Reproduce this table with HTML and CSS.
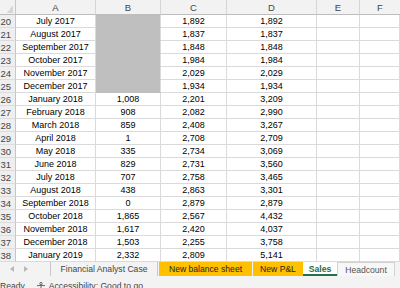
FILE: index.html
```html
<!DOCTYPE html>
<html>
<head>
<meta charset="utf-8">
<link rel="stylesheet" href="styles.css">
</head>
<body>
<div class="app">
  <div class="sheet">
    <div class="corner"><span class="tri"></span></div>
    <div class="ch">A</div><div class="ch">B</div><div class="ch">C</div><div class="ch">D</div><div class="ch">E</div><div class="ch last">F</div>

    <div class="rh">20</div><div class="c">July 2017</div><div class="c fill"></div><div class="c">1,892</div><div class="c">1,892</div><div class="c"></div><div class="c"></div>
    <div class="rh">21</div><div class="c">August 2017</div><div class="c fill"></div><div class="c">1,837</div><div class="c">1,837</div><div class="c"></div><div class="c"></div>
    <div class="rh">22</div><div class="c">September 2017</div><div class="c fill"></div><div class="c">1,848</div><div class="c">1,848</div><div class="c"></div><div class="c"></div>
    <div class="rh">23</div><div class="c">October 2017</div><div class="c fill"></div><div class="c">1,984</div><div class="c">1,984</div><div class="c"></div><div class="c"></div>
    <div class="rh">24</div><div class="c">November 2017</div><div class="c fill"></div><div class="c">2,029</div><div class="c">2,029</div><div class="c"></div><div class="c"></div>
    <div class="rh">25</div><div class="c">December 2017</div><div class="c fill"></div><div class="c">1,934</div><div class="c">1,934</div><div class="c"></div><div class="c"></div>
    <div class="rh">26</div><div class="c">January 2018</div><div class="c">1,008</div><div class="c">2,201</div><div class="c">3,209</div><div class="c"></div><div class="c"></div>
    <div class="rh">27</div><div class="c">February 2018</div><div class="c">908</div><div class="c">2,082</div><div class="c">2,990</div><div class="c"></div><div class="c"></div>
    <div class="rh">28</div><div class="c">March 2018</div><div class="c">859</div><div class="c">2,408</div><div class="c">3,267</div><div class="c"></div><div class="c"></div>
    <div class="rh">29</div><div class="c">April 2018</div><div class="c">1</div><div class="c">2,708</div><div class="c">2,709</div><div class="c"></div><div class="c"></div>
    <div class="rh">30</div><div class="c">May 2018</div><div class="c">335</div><div class="c">2,734</div><div class="c">3,069</div><div class="c"></div><div class="c"></div>
    <div class="rh">31</div><div class="c">June 2018</div><div class="c">829</div><div class="c">2,731</div><div class="c">3,560</div><div class="c"></div><div class="c"></div>
    <div class="rh">32</div><div class="c">July 2018</div><div class="c">707</div><div class="c">2,758</div><div class="c">3,465</div><div class="c"></div><div class="c"></div>
    <div class="rh">33</div><div class="c">August 2018</div><div class="c">438</div><div class="c">2,863</div><div class="c">3,301</div><div class="c"></div><div class="c"></div>
    <div class="rh">34</div><div class="c">September 2018</div><div class="c">0</div><div class="c">2,879</div><div class="c">2,879</div><div class="c"></div><div class="c"></div>
    <div class="rh">35</div><div class="c">October 2018</div><div class="c">1,865</div><div class="c">2,567</div><div class="c">4,432</div><div class="c"></div><div class="c"></div>
    <div class="rh">36</div><div class="c">November 2018</div><div class="c">1,617</div><div class="c">2,420</div><div class="c">4,037</div><div class="c"></div><div class="c"></div>
    <div class="rh">37</div><div class="c">December 2018</div><div class="c">1,503</div><div class="c">2,255</div><div class="c">3,758</div><div class="c"></div><div class="c"></div>
    <div class="rh">38</div><div class="c">January 2019</div><div class="c">2,332</div><div class="c">2,809</div><div class="c">5,141</div><div class="c"></div><div class="c"></div>
  </div>

  <div class="tabbar">
    <div class="nav">
      <svg class="arrow" width="4" height="6" viewBox="0 0 4 6"><path d="M4 0 L0 3 L4 6 Z" fill="#b8b8b8"/></svg>
      <svg class="arrow" width="4" height="6" viewBox="0 0 4 6"><path d="M0 0 L4 3 L0 6 Z" fill="#b8b8b8"/></svg>
    </div>
    <div class="tab plain">Financial Analyst Case</div>
    <div class="tab yellow bal">New balance sheet</div>
    <div class="tab yellow pl">New P&amp;L</div>
    <div class="tab active">Sales</div>
    <div class="tab boxed">Headcount</div>
  </div>

  <div class="status">
    <span class="ready">Ready</span>
    <svg class="acc" width="10" height="10" viewBox="0 0 10 10"><circle cx="5" cy="1.6" r="1.2" fill="none" stroke="#555" stroke-width="0.9"/><path d="M1 3.6 H9 M5 3.6 V6.5 M5 6.5 L3.2 9.5 M5 6.5 L6.8 9.5" fill="none" stroke="#555" stroke-width="0.9"/></svg>
    <span class="acctext">Accessibility: Good to go</span>
  </div>
</div>
</body>
</html>
```
FILE: styles.css
```css
html, body {
  margin: 0;
  padding: 0;
  width: 400px;
  height: 288px;
  overflow: hidden;
  background: #ffffff;
}

.app {
  display: flex;
  flex-direction: column;
  width: 400px;
  height: 288px;
}

.sheet {
  display: grid;
  grid-template-columns: 16px 80px 65px 66px 90px 43px 1fr;
  grid-template-rows: 15px;
  grid-auto-rows: 13px;
  font-family: "Liberation Sans", Arial, sans-serif;
  font-size: 9px;
  color: #000;
}

.sheet > div {
  box-sizing: border-box;
  display: flex;
  align-items: center;
  justify-content: center;
  white-space: nowrap;
  overflow: hidden;
}

.corner {
  background: #f2f2f2;
  border-right: 1px solid #c6c6c6;
  border-bottom: 1px solid #bdbdbd;
}

.sheet > .corner {
  align-items: flex-end;
  justify-content: flex-end;
}

.tri {
  width: 6px;
  height: 8px;
  margin: 0 2px 1px 0;
  background: linear-gradient(to top left, #d6d6d6 50%, transparent 51%);
}

.ch {
  background: #f2f2f2;
  color: #444;
  font-size: 9.5px;
  border-right: 1px solid #d6d6d6;
  border-bottom: 1px solid #bdbdbd;
  padding-top: 1px;
}

.ch.last {
  border-right: none;
}

.sheet > .rh {
  background: #efefef;
  color: #444;
  font-size: 9.5px;
  justify-content: flex-end;
  padding-right: 4px;
  border-right: 1px solid #c6c6c6;
  border-bottom: 1px solid #dcdcdc;
}

.c {
  border-right: 1px solid #dadada;
  border-bottom: 1px solid #dadada;
  background: #ffffff;
}

.c.fill {
  background: #bfbfbf;
  border-bottom-color: #bfbfbf;
}

.tabbar {
  display: flex;
  align-items: flex-end;
  height: 16px;
  background: #f3f3f3;
  font-family: "Liberation Sans", Arial, sans-serif;
  font-size: 8.6px;
}

.nav {
  box-sizing: border-box;
  width: 51px;
  height: 14px;
  display: flex;
  align-items: center;
  gap: 10px;
  padding-left: 10px;
  border-right: 1px solid #c8c8c8;
}

.tab {
  box-sizing: border-box;
  height: 14px;
  display: flex;
  align-items: center;
  justify-content: center;
  white-space: nowrap;
}

.tab.plain {
  width: 107px;
  color: #444;
  border-right: 1px solid #c8c8c8;
}

.tab.yellow {
  background: #ffc000;
  color: #1e1e1e;
}

.tab.bal {
  width: 93px;
  margin-left: 1px;
}

.tab.pl {
  width: 50px;
  margin-left: 1px;
}

.tab.active {
  width: 34px;
  background: #ffffff;
  color: #1e6b3f;
  font-weight: bold;
  border-bottom: 2px solid #217346;
  padding-top: 2px;
}

.tab.boxed {
  width: 58px;
  color: #555;
  background: #f7f7f7;
  border: 1px solid #d2d2d2;
  border-bottom: none;
}

.status {
  flex: 1;
  display: flex;
  align-items: flex-start;
  background: #f3f3f3;
  padding-top: 4px;
  font-family: "Liberation Sans", Arial, sans-serif;
  font-size: 8.6px;
  line-height: 12px;
  color: #444;
}

.ready {
  margin-left: 0;
}

.acc {
  margin: 2px 0 0 11px;
}

.acctext {
  margin-left: 3px;
}
```
